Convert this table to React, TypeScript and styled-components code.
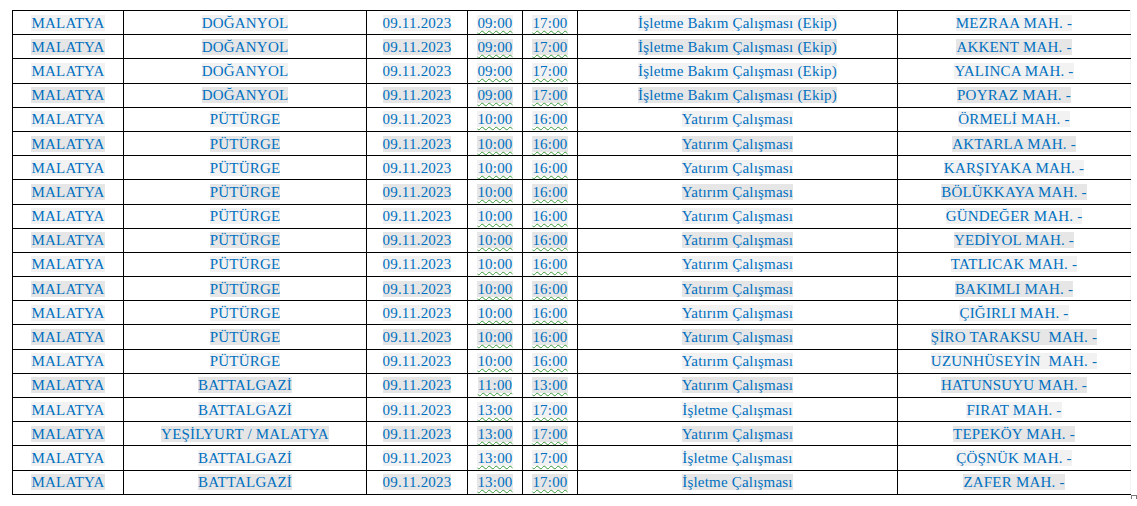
import React from 'react'
import styled, { createGlobalStyle } from 'styled-components'

interface Outage {
    city: string;
    district: string;
    date: string;
    start: string;
    end: string;
    work: string;
    area: string;
}

const rows: Outage[] = [
    { city: 'MALATYA', district: 'DOĞANYOL', date: '09.11.2023', start: '09:00', end: '17:00', work: 'İşletme Bakım Çalışması (Ekip)', area: 'MEZRAA MAH. -' },
    { city: 'MALATYA', district: 'DOĞANYOL', date: '09.11.2023', start: '09:00', end: '17:00', work: 'İşletme Bakım Çalışması (Ekip)', area: 'AKKENT MAH. -' },
    { city: 'MALATYA', district: 'DOĞANYOL', date: '09.11.2023', start: '09:00', end: '17:00', work: 'İşletme Bakım Çalışması (Ekip)', area: 'YALINCA MAH. -' },
    { city: 'MALATYA', district: 'DOĞANYOL', date: '09.11.2023', start: '09:00', end: '17:00', work: 'İşletme Bakım Çalışması (Ekip)', area: 'POYRAZ MAH. -' },
    { city: 'MALATYA', district: 'PÜTÜRGE', date: '09.11.2023', start: '10:00', end: '16:00', work: 'Yatırım Çalışması', area: 'ÖRMELİ MAH. -' },
    { city: 'MALATYA', district: 'PÜTÜRGE', date: '09.11.2023', start: '10:00', end: '16:00', work: 'Yatırım Çalışması', area: 'AKTARLA MAH. -' },
    { city: 'MALATYA', district: 'PÜTÜRGE', date: '09.11.2023', start: '10:00', end: '16:00', work: 'Yatırım Çalışması', area: 'KARŞIYAKA MAH. -' },
    { city: 'MALATYA', district: 'PÜTÜRGE', date: '09.11.2023', start: '10:00', end: '16:00', work: 'Yatırım Çalışması', area: 'BÖLÜKKAYA MAH. -' },
    { city: 'MALATYA', district: 'PÜTÜRGE', date: '09.11.2023', start: '10:00', end: '16:00', work: 'Yatırım Çalışması', area: 'GÜNDEĞER MAH. -' },
    { city: 'MALATYA', district: 'PÜTÜRGE', date: '09.11.2023', start: '10:00', end: '16:00', work: 'Yatırım Çalışması', area: 'YEDİYOL MAH. -' },
    { city: 'MALATYA', district: 'PÜTÜRGE', date: '09.11.2023', start: '10:00', end: '16:00', work: 'Yatırım Çalışması', area: 'TATLICAK MAH. -' },
    { city: 'MALATYA', district: 'PÜTÜRGE', date: '09.11.2023', start: '10:00', end: '16:00', work: 'Yatırım Çalışması', area: 'BAKIMLI MAH. -' },
    { city: 'MALATYA', district: 'PÜTÜRGE', date: '09.11.2023', start: '10:00', end: '16:00', work: 'Yatırım Çalışması', area: 'ÇIĞIRLI MAH. -' },
    { city: 'MALATYA', district: 'PÜTÜRGE', date: '09.11.2023', start: '10:00', end: '16:00', work: 'Yatırım Çalışması', area: 'ŞİRO TARAKSU  MAH. -' },
    { city: 'MALATYA', district: 'PÜTÜRGE', date: '09.11.2023', start: '10:00', end: '16:00', work: 'Yatırım Çalışması', area: 'UZUNHÜSEYİN  MAH. -' },
    { city: 'MALATYA', district: 'BATTALGAZİ', date: '09.11.2023', start: '11:00', end: '13:00', work: 'Yatırım Çalışması', area: 'HATUNSUYU MAH. -' },
    { city: 'MALATYA', district: 'BATTALGAZİ', date: '09.11.2023', start: '13:00', end: '17:00', work: 'İşletme Çalışması', area: 'FIRAT MAH. -' },
    { city: 'MALATYA', district: 'YEŞİLYURT / MALATYA', date: '09.11.2023', start: '13:00', end: '17:00', work: 'Yatırım Çalışması', area: 'TEPEKÖY MAH. -' },
    { city: 'MALATYA', district: 'BATTALGAZİ', date: '09.11.2023', start: '13:00', end: '17:00', work: 'İşletme Çalışması', area: 'ÇÖŞNÜK MAH. -' },
    { city: 'MALATYA', district: 'BATTALGAZİ', date: '09.11.2023', start: '13:00', end: '17:00', work: 'İşletme Çalışması', area: 'ZAFER MAH. -' },
]

// kolon genişlikleri (px)
const widths = [111, 243, 101, 55, 55, 320, 233]

export default function App() {
    return (
        <>
            <GlobalStyle />
            <Page>
                <TableWrap>
                    <Table>
                        <colgroup>
                            {widths.map((w, i) => <col key={i} style={{ width: w }} />)}
                        </colgroup>
                        <tbody>
                            {rows.map((r, index) => {
                                const dark = index % 2 === 1
                                return (
                                    <Row key={index}>
                                        <Cell><Mark $dark={dark}>{r.city}</Mark></Cell>
                                        <Cell><Mark $dark={dark}>{r.district}</Mark></Cell>
                                        <Cell><Mark $dark={dark}>{r.date}</Mark></Cell>
                                        <Cell><Mark $dark={dark}><Wavy>{r.start}</Wavy></Mark></Cell>
                                        <Cell><Mark $dark={dark}><Wavy>{r.end}</Wavy></Mark></Cell>
                                        <Cell><Mark $dark={dark}>{r.work}</Mark></Cell>
                                        <LastCell><Mark $dark={dark}>{r.area}</Mark></LastCell>
                                    </Row>
                                )
                            })}
                        </tbody>
                    </Table>
                    <ResizeHandle />
                </TableWrap>
            </Page>
        </>
    )
}

const GlobalStyle = createGlobalStyle`
    html, body {
        margin: 0;
        padding: 0;
        background: #fff;
    }
`

const Page = styled.div`
    padding: 10px 0 0 12px;
    font-family: "Liberation Serif", "Times New Roman", serif;
    font-size: 15px;
    color: #0070c0;
`

const TableWrap = styled.div`
    position: relative;
    display: inline-block;
`

const Table = styled.table`
    table-layout: fixed;
    width: 1118px;
    border-collapse: collapse;
`

const Row = styled.tr`
    height: 24.2px;
`

const Cell = styled.td`
    padding: 0 4px;
    border: 1px solid #000;
    text-align: center;
    vertical-align: middle;
    white-space: nowrap;
    line-height: 22px;
    letter-spacing: 0.2px;
`

const LastCell = styled(Cell)`
    border-right-color: #f3f3f3;
`

const Mark = styled.span<{ $dark: boolean }>`
    background: ${({ $dark }) => ($dark ? '#e6e6e6' : '#f2f2f2')};
    white-space: pre;
`

const Wavy = styled.span`
    text-decoration: underline wavy #3a9a3a;
    text-decoration-thickness: 1px;
    text-underline-offset: 2px;
`

const ResizeHandle = styled.span`
    position: absolute;
    right: -6px;
    bottom: -6px;
    width: 4px;
    height: 4px;
    border: 1px solid #7a7a7a;
    background: #fff;
`
